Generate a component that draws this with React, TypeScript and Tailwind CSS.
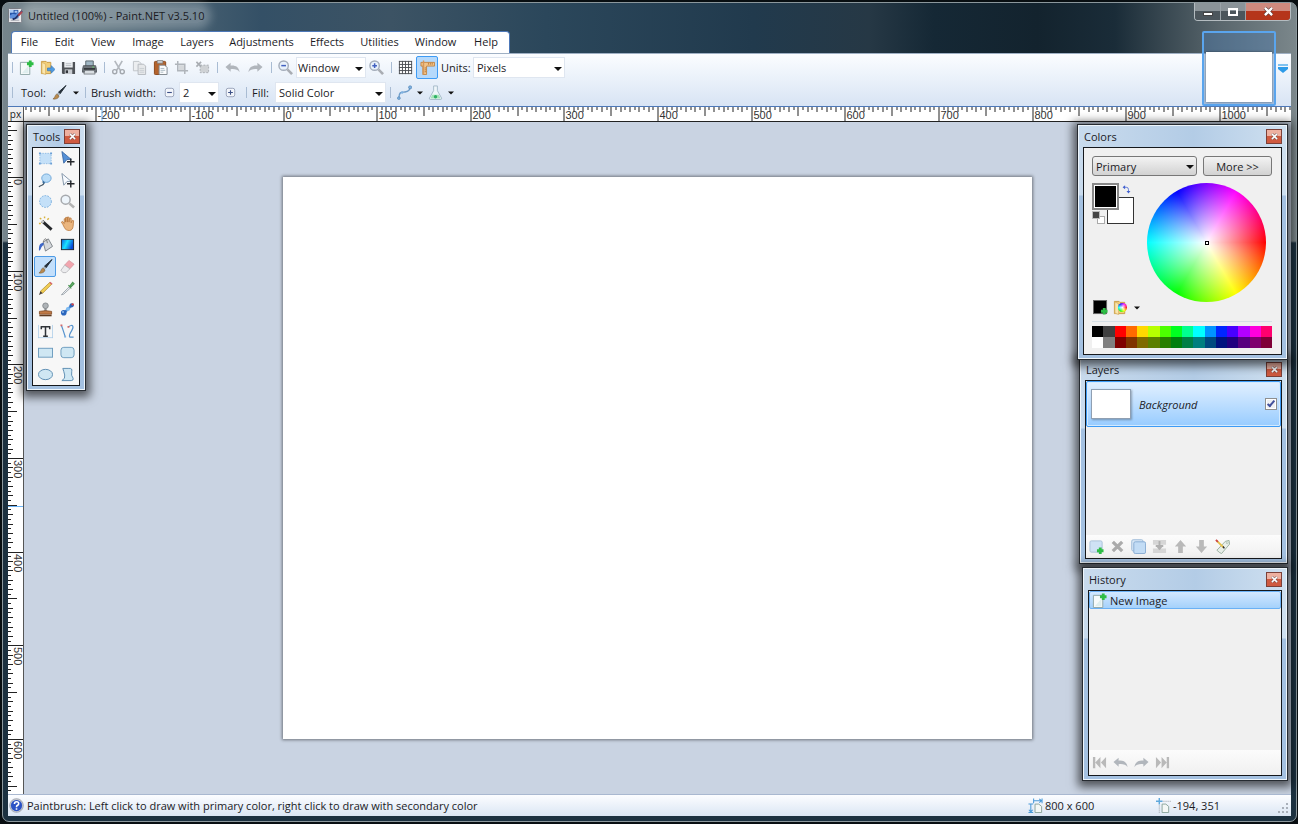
import React, { useState } from 'react';
import clsx from 'clsx';

const ZOOM = 749 / 800;

const MENUS = [
    { name: 'File', width: 'w-[35px]' },
    { name: 'Edit', width: 'w-[35px]' },
    { name: 'View', width: 'w-[42px]' },
    { name: 'Image', width: 'w-[48px]' },
    { name: 'Layers', width: 'w-[50px]' },
    { name: 'Adjustments', width: 'w-[79px]' },
    { name: 'Effects', width: 'w-[52px]' },
    { name: 'Utilities', width: 'w-[53px]' },
    { name: 'Window', width: 'w-[59px]' },
    { name: 'Help', width: 'w-[42px]' },
];

const PALETTE = [
    '#000000', '#404040', '#ff0000', '#ff6a00', '#ffd800', '#b6ff00', '#4cff00', '#00ff21',
    '#00ff90', '#00ffff', '#0094ff', '#0026ff', '#4800ff', '#b200ff', '#ff00dc', '#ff006e',
    '#ffffff', '#808080', '#7f0000', '#7f3300', '#7f6a00', '#5b7f00', '#267f00', '#007f0e',
    '#007f46', '#007f7f', '#004a7f', '#00137f', '#21007f', '#57007f', '#7f006e', '#7f0037',
];

const Svg = ({ children, className = 'h-[15px] w-[15px]' }) => (
    <svg viewBox="0 0 16 16" className={clsx('shrink-0', className)} fill="none" aria-hidden="true">
        {children}
    </svg>
);

/* ---------- icons ---------- */

const PlusBadge = ({ x, y }) => (
    <path d={`M${x} ${y - 3.5}v7M${x - 3.5} ${y}h7`} stroke="#2ebd45" strokeWidth="3" />
);

const ICONS = {
    app: (
        <>
            <rect x="0.5" y="0.5" width="14" height="15" rx="1" fill="#e8e8ea" stroke="#70737c" />
            <rect x="2" y="2" width="9" height="9" fill="#2454a8" />
            <path d="M2 2h4v3H2zM7 3h3v2H7z" fill="#a9c9f2" />
            <path d="M2 8l3-2 3 1 3-3v7H2z" fill="#5d8fdc" />
            <path d="M3 13h9" stroke="#9a9da6" />
            <path d="M5 12l3-1 7-8" stroke="#1c2f66" strokeWidth="2" />
            <path d="M11 8l4-4" stroke="#a8333f" strokeWidth="2" />
        </>
    ),
    newDoc: (
        <>
            <path d="M1.500 2.500h10v13h-10z" fill="#f6fafa" stroke="#8ea5a5" />
            <path d="M3 14h7V6z" fill="#dfeeee" />
            <PlusBadge x={12} y={4} />
        </>
    ),
    open: (
        <>
            <path d="M1.500 1.500h5l1 1h4v12h-10z" fill="#f3cf7a" stroke="#c99b45" />
            <path d="M2 2.500l4 2v11l-4-1.500z" fill="#fae6ae" stroke="#d5ab55" strokeWidth="0.7" />
            <path d="M8 8.500h4V6l4 4-4 4v-2.500H8z" fill="#4f9be0" stroke="#2f74b8" strokeWidth="0.7" />
        </>
    ),
    save: (
        <>
            <path d="M1 2h14v13H2l-1-1z" fill="#4e5257" />
            <path d="M3.500 2h9v6h-9z" fill="#eef1f4" />
            <path d="M5 4h6M5 6h6" stroke="#b5bac0" />
            <path d="M4 10h8v5H4z" fill="#c9cdd2" />
            <path d="M5 11h2.500v3H5z" fill="#33363a" />
        </>
    ),
    print: (
        <>
            <path d="M4 1h8v6H4z" fill="#9fb6c4" stroke="#59656d" />
            <path d="M1.500 6h13l1 4v3h-15v-3z" fill="#6f767c" stroke="#43484d" strokeWidth="0.800" />
            <path d="M2 9.500h12" stroke="#26292c" strokeWidth="1.500" />
            <path d="M3 11h10l1 4H2z" fill="#d9dee2" stroke="#555b60" strokeWidth="0.700" />
            <path d="M11 7.500h2" stroke="#6fd76f" />
        </>
    ),
    cut: (
        <>
            <path d="M4 1l6 10M12 1L6 11" stroke="#b3b8be" strokeWidth="1.800" />
            <circle cx="4" cy="12.500" r="2.200" stroke="#a3a8ae" strokeWidth="1.500" />
            <circle cx="12" cy="12.500" r="2.200" stroke="#a3a8ae" strokeWidth="1.500" />
        </>
    ),
    copy: (
        <>
            <path d="M1.500 1.500h6l2 2v8h-8z" fill="#eceef0" stroke="#bfc3c8" />
            <path d="M6.500 4.500h6l2 2v9h-8z" fill="#e6e8ea" stroke="#b4b9be" />
            <path d="M8 9h5M8 11h5M8 13h5" stroke="#c9cdd1" />
        </>
    ),
    paste: (
        <>
            <rect x="1.500" y="1.500" width="12" height="14" rx="1" fill="#b4632c" stroke="#8a4518" />
            <path d="M4.500 0.500h6v3h-6z" fill="#c9ccd0" stroke="#777" strokeWidth="0.700" />
            <path d="M6.500 5.500h6l2.500 2.500v7.500H6.500z" fill="#fbfcfd" stroke="#7d8790" />
            <path d="M8 9h4M8 11h5M8 13h3" stroke="#a9b6c0" />
        </>
    ),
    crop: (
        <>
            <path d="M5 5.500h6v6H5z" fill="#d5d8db" />
            <path d="M4 1v10.500h11M1 4.500h10.500V15" stroke="#b0b5bb" strokeWidth="1.600" />
        </>
    ),
    deselect: (
        <>
            <rect x="5.500" y="5.500" width="9" height="8" fill="#cfd2d5" stroke="#a7acb1" strokeDasharray="2 1.500" />
            <path d="M1.500 2l5 5M6.500 2l-5 5" stroke="#a9adb2" strokeWidth="1.800" />
        </>
    ),
    undo: <path d="M0.500 7.500L6 3v3c5-0.500 9 1.500 9.500 7-2-3-5-3.500-9.500-3.200V12.500z" fill="#b1b6bc" />,
    redo: <path d="M15.500 7.500L10 3v3c-5-0.500-9 1.500-9.500 7 2-3 5-3.500 9.500-3.200V12.500z" fill="#b1b6bc" />,
    zoomOut: (
        <>
            <path d="M10 10l5 5" stroke="#a9adb3" strokeWidth="2.800" />
            <circle cx="6" cy="6" r="5" fill="#e8f1fb" stroke="#a4adba" strokeWidth="1.500" />
            <path d="M3.500 6h5" stroke="#4261c0" strokeWidth="1.600" />
        </>
    ),
    zoomIn: (
        <>
            <path d="M10 10l5 5" stroke="#a9adb3" strokeWidth="2.800" />
            <circle cx="6" cy="6" r="5" fill="#e8f1fb" stroke="#a4adba" strokeWidth="1.500" />
            <path d="M3.500 6h5M6 3.500v5" stroke="#4261c0" strokeWidth="1.600" />
        </>
    ),
    grid: (
        <>
            <path d="M1 1h14v14H1z" fill="#fff" />
            <path d="M1.500 1v14M4.750 1v14M8 1v14M11.250 1v14M14.500 1v14M1 1.500h14M1 4.750h14M1 8h14M1 11.250h14M1 14.500h14" stroke="#4b4e53" />
        </>
    ),
    rulers: (
        <>
            <path d="M1 2.500h14.500v4H7v9H3V6.500H1z" fill="#f2c388" stroke="#c07f3a" strokeWidth="0.900" />
            <path d="M3 0.500h1.500v15H3z" fill="#d6975a" />
            <path d="M9 3v2M11 3v2M13 3v2M5 8.500h1.500M5 10.500h1.500M5 12.500h1.500" stroke="#a86a2c" strokeWidth="0.800" />
        </>
    ),
    brush: (
        <>
            <path d="M15 0.500L8.500 9.500 6.500 8z" fill="#25303a" stroke="#25303a" strokeLinejoin="round" />
            <path d="M6.800 7.800l2 1.700-1.600 2.200-2.400-2z" fill="#a9b1b8" />
            <path d="M5 9.500c-2 1.500-1.500 3.500-4 5.500 4 0.500 6-1 6.500-3.200z" fill="#b98a4e" stroke="#6b4a22" strokeWidth="0.500" />
        </>
    ),
    minus: (
        <>
            <rect x="3.500" y="3.500" width="9" height="9" rx="2" fill="#f3f6fb" stroke="#98a1b8" />
            <path d="M5.500 8h5" stroke="#3c4f86" strokeWidth="1.200" />
        </>
    ),
    plus: (
        <>
            <rect x="3.500" y="3.500" width="9" height="9" rx="2" fill="#f3f6fb" stroke="#98a1b8" />
            <path d="M5.500 8h5M8 5.500v5" stroke="#3c4f86" strokeWidth="1.200" />
        </>
    ),
    curve: (
        <>
            <path d="M2 14C2 6 6 8 8.500 7.500S14 6 14 2" stroke="#6d9cc9" strokeWidth="1.500" />
            <circle cx="2" cy="14" r="1.500" fill="#7fb2e2" stroke="#4a7cab" strokeWidth="0.600" />
            <circle cx="5.500" cy="8" r="1.300" fill="#7fb2e2" />
            <circle cx="14" cy="2.500" r="1.700" fill="#7fb2e2" stroke="#4a7cab" strokeWidth="0.600" />
        </>
    ),
    flask: (
        <>
            <path d="M6 1h4v5l4.500 8q0.300 1.500-1.500 1.500H3q-1.800 0-1.500-1.500L6 6z" fill="#eef6fa" stroke="#9db3c2" strokeWidth="0.900" />
            <path d="M4.500 10.500h7l2 4H2.500z" fill="#a4e2b9" />
            <circle cx="8" cy="12.500" r="1.800" fill="#2fb265" />
        </>
    ),
    rectSelect: (
        <>
            <rect x="2" y="2.500" width="12" height="11" fill="#c4e0f8" stroke="#8fbce4" strokeDasharray="1.500 1.200" />
            <path d="M1 1.500h2v2H1zM13 1.500h2v2h-2zM1 12.500h2v2H1zM13 12.500h2v2h-2z" fill="#6a9fd6" />
        </>
    ),
    movePixels: (
        <>
            <path d="M2 0.500l10 8.500H7.500L4 13z" fill="#5590d6" stroke="#2c5c9c" strokeWidth="0.800" />
            <path d="M11.500 8v7.500M7.500 11.500h8" stroke="#23262b" strokeWidth="1.500" />
        </>
    ),
    lasso: (
        <>
            <path d="M6 10c1 4-3 2-5 5" stroke="#4a5966" strokeWidth="1.200" />
            <ellipse cx="9" cy="5.500" rx="5" ry="4.500" fill="#b9dcf7" stroke="#6ea5d8" />
            <path d="M5 9l2 2" stroke="#3b6f9e" strokeWidth="1.800" />
        </>
    ),
    moveSelection: (
        <>
            <path d="M2 0.500l10 8.500H7.500L4 13z" fill="#f8fbff" stroke="#8093a8" />
            <path d="M11.500 8v7.500M7.500 11.500h8" stroke="#23262b" strokeWidth="1.500" />
        </>
    ),
    ellipseSelect: <circle cx="8" cy="8" r="6.300" fill="#c4e0f8" stroke="#74abdc" strokeDasharray="1.800 1.300" />,
    zoomTool: (
        <>
            <path d="M10 10l5 4.500" stroke="#b3b3b3" strokeWidth="2.800" />
            <circle cx="6" cy="6" r="4.800" fill="#eef5fb" stroke="#a6a9ad" strokeWidth="1.600" />
        </>
    ),
    wand: (
        <>
            <path d="M4.500 5.500L14.500 14.500" stroke="#24262a" strokeWidth="3" />
            <path d="M4 5l2 2" stroke="#c8c8c8" strokeWidth="2.500" />
            <path d="M2 2l1.500 1.500M7 0.500v2M1 8h2M10 4l1.500-1.500" stroke="#d7b13c" strokeWidth="1.500" />
        </>
    ),
    hand: (
        <path
            d="M3 9L1.500 6.500l1.200-0.800L4.500 8V3l1.500-0.300V6.500V1.500h1.800v5V1.200h1.800V6.500l0.800-4.500 1.500 0.300v5l1.200-2.800 1.400 0.500-0.500 6c-0.300 2.500-1.500 4.500-4 4.500S5.500 14.500 4.500 12z"
            fill="#eab57e" stroke="#b8763a" strokeWidth="0.800"
        />
    ),
    bucket: (
        <>
            <path d="M5.500 5.500l5.500-3.500 4.500 8-7.500 5z" fill="#d5d8dc" stroke="#6f757b" strokeWidth="0.900" />
            <path d="M5.500 5.500C7 1 9 0 10 6.500" stroke="#777" />
            <path d="M6 6C1.500 6.500 1 9 1 14.500c2.500 0 1.500-4 5-6z" fill="#3d66c8" />
        </>
    ),
    gradient: (
        <>
            <rect x="1.500" y="2.500" width="13" height="11" fill="url(#gradTool)" stroke="#1a2430" />
            <defs>
                <linearGradient id="gradTool" x1="0" y1="0" x2="1" y2="0.400">
                    <stop offset="0" stopColor="#0a5ae0" />
                    <stop offset="0.500" stopColor="#19e4ff" />
                    <stop offset="1" stopColor="#0848d8" />
                </linearGradient>
            </defs>
        </>
    ),
    eraser: (
        <>
            <path d="M9.500 1.500l5.500 4-4.500 5-5.500-4z" fill="#f2a5ae" stroke="#d08b94" strokeWidth="0.700" />
            <path d="M5 6.500l5.500 4-4 4H3L1 12z" fill="#ececee" stroke="#a5a5aa" strokeWidth="0.700" />
        </>
    ),
    pencil: (
        <>
            <path d="M12.500 1.500l2 2-9.500 9.500-2.500-2z" fill="#f0cd54" stroke="#a98322" strokeWidth="0.700" />
            <path d="M12 2l1.200-1.200 2.300 2L14.500 4z" fill="#d6686c" />
            <path d="M2.500 11L1 15l4-2z" fill="#4a4038" />
        </>
    ),
    picker: (
        <>
            <path d="M10 6L3 13l-1.500 1.800L4 14l7-6.500z" fill="#e9edf0" stroke="#8d969d" strokeWidth="0.800" />
            <path d="M9 4.500l3 3.500M10.500 5.500l3-4 1.500 1.500-3 3z" fill="#6fbd75" stroke="#4a9451" strokeWidth="1.200" />
        </>
    ),
    stamp: (
        <>
            <circle cx="8" cy="4" r="3" fill="#aeb3b7" stroke="#787d81" strokeWidth="0.800" />
            <path d="M7 6.500h2l0.500 4h-3z" fill="#8b8f93" />
            <path d="M1.500 10q6.500-1.500 13 0v3h-13z" fill="#c07a47" stroke="#7c451f" strokeWidth="0.800" />
            <path d="M1.500 14.500h13" stroke="#5f3a20" strokeWidth="1.500" />
        </>
    ),
    recolor: (
        <>
            <path d="M5 11l7-7" stroke="#3d7dcc" strokeWidth="2.500" />
            <circle cx="12.500" cy="3.500" r="2.300" fill="#2b66bd" />
            <circle cx="13.500" cy="2.500" r="1.300" fill="#d34747" />
            <circle cx="8.500" cy="7.500" r="2.200" fill="#7fbcf2" />
            <circle cx="4" cy="11.500" r="3" fill="#2b66bd" />
            <circle cx="3.200" cy="10.600" r="1" fill="#9cc5f0" />
        </>
    ),
    text: (
        <>
            <path d="M0.500 1v14M15.500 1v14M0 14.500h16" stroke="#a8cbe8" strokeWidth="0.800" />
            <path d="M8 3v10M3 3h10M3.500 2.500v3M12.500 2.500v3M5.500 13h5" stroke="#2f3338" strokeWidth="1.600" />
        </>
    ),
    line: (
        <>
            <path d="M1.500 1.500C3 5 4 9 5.500 13.500M9 3c5-3.500 6 0 3.500 4s-3 6-2 7h4" stroke="#5692cc" strokeWidth="1.300" />
            <path d="M0.500 0.500h2v2h-2zM8 2h2v2H8z" fill="#d66a6a" />
            <path d="M4.500 12.500h2v2h-2z" fill="#7fb2e2" />
        </>
    ),
    rect: <rect x="0.500" y="3.500" width="15" height="9.500" fill="#cfe7f3" stroke="#6b9bbd" />,
    roundRect: <rect x="1" y="2.500" width="14" height="11" rx="3" fill="#cfe7f3" stroke="#6b9bbd" />,
    ellipse: <ellipse cx="8" cy="8" rx="7.500" ry="5.500" fill="#cfe7f3" stroke="#5a8bb0" />,
    freeform: <path d="M3 1.500h6.500q4-0.500 3 3.500t1.500 7q0.500 2.500-2 2.500H2q4-2 3-6T3 1.500z" fill="#cfe7f3" stroke="#5a8bb0" />,
    addLayer: (
        <>
            <rect x="1" y="2" width="13" height="12" rx="1.500" fill="#cfe2f5" stroke="#a9c0d9" />
            <PlusBadge x={12} y={12.500} />
        </>
    ),
    remove: <path d="M3 3l10 10M13 3L3 13" stroke="#ababab" strokeWidth="3.500" />,
    duplicate: (
        <>
            <rect x="0.800" y="0.800" width="12" height="12" rx="1.500" fill="#d9e8f6" stroke="#9bb9d8" />
            <rect x="3" y="3" width="12.500" height="12.500" rx="1.500" fill="#c2dcf5" stroke="#86abd2" />
        </>
    ),
    merge: (
        <>
            <path d="M1 1h14v5H1zM1 10h14v5H1z" fill="#d6d6d6" />
            <path d="M8 2v9M4 7.500h8" stroke="#b0b0b0" strokeWidth="2" />
            <path d="M5 8.500h6L8 12z" fill="#b0b0b0" />
        </>
    ),
    up: <path d="M8 1l6 7h-3.500v7h-5V8H2z" fill="#b9b9b9" />,
    down: <path d="M8 15l6-7h-3.500V1h-5v7H2z" fill="#b9b9b9" />,
    properties: (
        <>
            <path d="M2 12L11 2.500l4-1 0.500 4L7 15.500l-2-1z" fill="#e8efe9" stroke="#8fa796" strokeWidth="0.900" />
            <circle cx="13" cy="4" r="1" fill="#fff" stroke="#8fa796" strokeWidth="0.600" />
            <path d="M2 2l7 7" stroke="#e3c04a" strokeWidth="2" />
            <path d="M1 1l2 2" stroke="#cc4646" strokeWidth="2" />
            <path d="M8.500 8l1.500 2" stroke="#2b2b2b" strokeWidth="1.500" />
        </>
    ),
    rewind: <path d="M1 2h2.500v12H1zM9 2v12L3.500 8zM15 2v12L9.500 8z" fill="#b9b9b9" />,
    forward: <path d="M15 2h-2.500v12H15zM7 2v12l5.500-6zM1 2v12l5.500-6z" fill="#b9b9b9" />,
    swap: (
        <>
            <path d="M4 4h3.500q4 0 4 4v3" stroke="#5470d6" strokeWidth="1.600" />
            <path d="M5.500 0.500v7L1 4zM8 10.500h7l-3.500 4.500z" fill="#4361cf" />
        </>
    ),
    addColor: (
        <>
            <rect x="0.500" y="0.500" width="14" height="14" fill="#000" stroke="#666" />
            <PlusBadge x={12} y={12} />
        </>
    ),
    help: (
        <>
            <circle cx="8" cy="8" r="7.300" fill="#c9ccd2" stroke="#8a8f9b" strokeWidth="0.700" />
            <circle cx="8" cy="8" r="6" fill="#2a52c5" />
            <path d="M5.800 6.300q0-2.300 2.300-2.300t2.200 2q0 1.200-1.200 1.800T8 9.800M8 11v1.600" stroke="#fff" strokeWidth="1.700" />
        </>
    ),
    imageSize: (
        <>
            <path d="M6 0.500v5M15 0.500v5M6 3h8M12 1l2.500 2-2.500 2M0.500 6.500h5M0.500 15.500h5M3 7v8M1 12.500l2 2.500 2-2.500" stroke="#4a9ad8" strokeWidth="1.100" />
            <path d="M7.500 6.500h4l3 2.500v6.500h-7z" fill="#f4f8f6" stroke="#8aa39b" />
        </>
    ),
    position: (
        <>
            <path d="M3.500 0v7M0 3.500h7" stroke="#5fa8dc" strokeWidth="1.500" />
            <path d="M3.500 8v8M8 3.500h8" stroke="#8a939b" strokeDasharray="1 1.200" />
            <path d="M6.500 6.500h4l3 2.500v6.500h-7z" fill="#f4f8f6" stroke="#8aa39b" />
        </>
    ),
};

/* ---------- small controls ---------- */

const IconButton = ({ icon, label, size = 'w-[21px] h-[21px]' }) => (
    <button type="button" aria-label={label} className={clsx('flex shrink-0 items-center justify-center', size)}>
        <Svg>{ICONS[icon]}</Svg>
    </button>
);

const Separator = () => <span className="ml-1 mr-[3px] h-[11px] w-px shrink-0 bg-[#a9bcd3]" />;

const Triangle = ({ className = 'w-2' }) => (
    <svg viewBox="0 0 8 4" className={clsx('h-1 shrink-0', className)} aria-hidden="true">
        <path d="M0 0h8L4 4z" fill="#111" />
    </svg>
);

const DropButton = ({ label, width }) => (
    <button type="button" aria-label={label} className={clsx('flex h-[21px] shrink-0 items-center justify-center', width)}>
        <Triangle className="w-[6px]" />
    </button>
);

const Dropdown = ({ id = undefined, label = undefined, options, className, pad = 'pl-[3px]' }) => (
    <span className={clsx('relative flex shrink-0', className)}>
        <select id={id} aria-label={label} className={clsx('w-full appearance-none bg-transparent outline-none', pad)}>
            {options.map((o) => (
                <option key={o}>{o}</option>
            ))}
        </select>
        <Triangle className="pointer-events-none absolute right-[2px] top-1/2 w-2 -translate-y-px" />
    </span>
);

/* ---------- rulers ---------- */

const TICKS = Array.from({ length: 321 }, (_, i) => (i - 80) * 5);

const Ruler = ({ vertical = false }) => {
    const center = vertical ? 300 : 400;
    const labels = vertical ? [0, 100, 200, 300, 400, 500, 600] : [-200, -100, 0, 100, 200, 300, 400, 500, 600, 700, 800, 900, 1000];
    const cursor = vertical ? 351 : -194;
    const cursorPos = Math.round((cursor - center) * ZOOM);
    return (
        <svg
            className={vertical ? 'h-full w-[15px]' : 'h-[14px] w-full'}
            aria-label={vertical ? 'Vertical ruler' : 'Horizontal ruler'}
        >
            <svg x={vertical ? 0 : '50%'} y={vertical ? '50%' : 0} overflow="visible">
                {TICKS.map((u) => {
                    const p = Math.round((u - center) * ZOOM);
                    const len = u % 100 === 0 ? 15 : u % 50 === 0 ? 9 : u % 10 === 0 ? 5 : 3;
                    return vertical ? (
                        <rect key={u} x="0" y={p} width={len} height="1" fill="#222" />
                    ) : (
                        <rect key={u} x={p} y="0" width="1" height={len} fill="#222" />
                    );
                })}
                {labels.map((u) => {
                    const p = Math.round((u - center) * ZOOM);
                    return (
                        <text
                            key={u}
                            className="fill-[#333] font-['Liberation_Sans',sans-serif] text-[11px]"
                            transform={vertical ? `translate(6 ${p + 2}) rotate(90)` : `translate(${p + 2} 12)`}
                        >
                            {u}
                        </text>
                    );
                })}
                {vertical ? (
                    <rect x="0" y={cursorPos} width="15" height="1" fill="#6bb4f7" />
                ) : (
                    <rect x={cursorPos} y="0" width="1" height="14" fill="#6bb4f7" />
                )}
            </svg>
        </svg>
    );
};

/* ---------- floating panels ---------- */

const Panel = ({ title, className = '', children }) => (
    <section
        className={clsx(
            'pointer-events-auto relative flex flex-col border border-[#262b31] px-[5px] pb-1',
            'bg-[linear-gradient(to_bottom,transparent_70px,#a4c1e1_71px),linear-gradient(to_right,#c9dbed,#b3cce6_55%,#cfe0f0)]',
            'shadow-[inset_0_0_0_1px_#eef5fb,0_2px_9px_4px_rgba(0,0,0,0.600)]',
            className,
        )}
    >
        <header className="flex h-[22px] shrink-0 items-center justify-between pl-px">
            <h2>{title}</h2>
            <button
                type="button"
                aria-label={`Close ${title}`}
                className="flex h-[15px] w-[16px] items-center justify-center border border-[#7c4038] bg-linear-to-b from-[#eeb0a0] from-45% to-[#cf5a40] to-50%"
            >
                <svg viewBox="0 0 8 8" className="h-[7px] w-[7px]" aria-hidden="true">
                    <path d="M1 1l6 6M7 1L1 7" stroke="#6b4a4a" strokeWidth="3" />
                    <path d="M1 1l6 6M7 1L1 7" stroke="#fff" strokeWidth="1.800" />
                </svg>
            </button>
        </header>
        <div className="flex min-h-0 flex-1 flex-col border border-[#15181c] bg-[#f0f0f0]">{children}</div>
    </section>
);

const TOOLS = [
    ['rectSelect', 'Rectangle Select'], ['movePixels', 'Move Selected Pixels'],
    ['lasso', 'Lasso Select'], ['moveSelection', 'Move Selection'],
    ['ellipseSelect', 'Ellipse Select'], ['zoomTool', 'Zoom'],
    ['wand', 'Magic Wand'], ['hand', 'Pan'],
    ['bucket', 'Paint Bucket'], ['gradient', 'Gradient'],
    ['brush', 'Paintbrush'], ['eraser', 'Eraser'],
    ['pencil', 'Pencil'], ['picker', 'Color Picker'],
    ['stamp', 'Clone Stamp'], ['recolor', 'Recolor'],
    ['text', 'Text'], ['line', 'Line / Curve'],
    ['rect', 'Rectangle'], ['roundRect', 'Rounded Rectangle'],
    ['ellipse', 'Ellipse'], ['freeform', 'Freeform Shape'],
];

const ToolsPanel = () => {
    const [active, setActive] = useState('brush');
    return (
        <Panel title="Tools" className="w-[60px]">
            <div className="grid h-[237px] grid-cols-2 grid-rows-11 bg-[#f7f7f7] px-px">
                {TOOLS.map(([icon, label]) => (
                    <button
                        key={icon}
                        type="button"
                        aria-label={label}
                        onClick={() => setActive(icon)}
                        className={clsx(
                            'flex items-center justify-center rounded-[2px] border',
                            active === icon ? 'border-[#4d9be6] bg-[#c3dffb]' : 'border-transparent',
                        )}
                    >
                        <Svg>{ICONS[icon]}</Svg>
                    </button>
                ))}
            </div>
        </Panel>
    );
};

const ColorsPanel = () => (
    <Panel title="Colors" className="z-10 h-[236px] w-[211px]">
        <div className="flex flex-1 flex-col pl-2 pr-[9px] pt-2">
            <div className="flex justify-between">
                <Dropdown
                    label="Active color"
                    options={['Primary', 'Secondary']}
                    className="h-[20px] w-[105px] rounded-[3px] border border-[#777] bg-linear-to-b from-[#f3f3f3] to-[#d2d2d2]"
                />
                <button type="button" className="h-[20px] w-[69px] rounded-[3px] border border-[#777] bg-linear-to-b from-[#f3f3f3] to-[#d2d2d2]">
                    More &gt;&gt;
                </button>
            </div>
            <div className="flex justify-between pr-[6px] pt-[7px]">
                <div className="flex flex-col justify-between">
                    <div className="relative h-[41px] w-[42px]">
                        <button type="button" aria-label="Secondary color" className="absolute bottom-0 right-0 h-[27px] w-[27px] border border-[#333] bg-white" />
                        <button type="button" aria-label="Primary color" className="absolute left-0 top-0 h-[27px] w-[27px] border-2 border-[#888] bg-black shadow-[inset_0_0_0_1px_#fff]" />
                        <button type="button" aria-label="Swap colors" className="absolute right-[3px] top-[2px]">
                            <Svg className="h-[9px] w-[9px]">{ICONS.swap}</Svg>
                        </button>
                        <button type="button" aria-label="Reset colors" className="absolute bottom-0 left-0 h-[13px] w-[13px]">
                            <span className="absolute bottom-0 right-0 h-2 w-2 border border-[#aaa] bg-white" />
                            <span className="absolute left-0 top-0 h-2 w-2 border border-[#bbb] bg-[#444]" />
                        </button>
                    </div>
                    <div className="flex items-center">
                        <IconButton icon="addColor" label="Add color to palette" size="w-[16px] h-[17px]" />
                        <button type="button" aria-label="Palettes" className="ml-[5px] flex items-center">
                            <span className="relative h-[15px] w-[15px]">
                                <Svg>
                                    <path d="M1.500 1.500h5l1 1h5v12h-11z" fill="#f3cf7a" stroke="#c99b45" />
                                    <path d="M2 2l4 2v11.500l-4-1.500z" fill="#fae6ae" stroke="#d5ab55" strokeWidth="0.700" />
                                </Svg>
                                <span className="absolute right-[1px] top-[3px] h-[9px] w-[9px] rounded-full bg-[radial-gradient(#fff,transparent_70%),conic-gradient(from_90deg,red,yellow,lime,cyan,blue,magenta,red)]" />
                            </span>
                            <Triangle className="ml-[6px] w-[6px]" />
                        </button>
                    </div>
                </div>
                <div className="flex h-[133px] flex-col">
                    <div className="relative h-[119px] w-[119px] rounded-full bg-[radial-gradient(circle_closest-side,#fff,transparent),conic-gradient(from_90deg,red,yellow,lime,cyan,blue,magenta,red)]">
                        <span className="absolute left-1/2 top-1/2 h-1 w-1 -translate-1/2 border border-black bg-white" />
                    </div>
                </div>
            </div>
            <hr className="mt-[5px] border-[#d5dfe5]" />
            <div className="mt-1 grid h-[22px] grid-cols-16">
                {PALETTE.map((color) => (
                    <button key={color} type="button" aria-label={color} style={{ backgroundColor: color }} />
                ))}
            </div>
        </div>
    </Panel>
);

const LAYER_ACTIONS = [
    ['addLayer', 'Add New Layer'], ['remove', 'Delete Layer'], ['duplicate', 'Duplicate Layer'],
    ['merge', 'Merge Layer Down'], ['up', 'Move Layer Up'], ['down', 'Move Layer Down'], ['properties', 'Layer Properties'],
];

const LayersPanel = () => (
    <Panel title="Layers" className="-mt-[3px] h-[207px] w-[209px]">
        <div className="flex min-h-0 flex-1 flex-col">
            <label className="flex h-[46px] shrink-0 items-center rounded-[2px] border border-[#3d9bf5] bg-linear-to-b from-[#e2f0ff] to-[#98ccff] pl-1 pr-[3px] shadow-[inset_0_0_0_1px_#d3eaff]">
                <span className="h-[30px] w-[40px] border border-[#8f9fb2] bg-white shadow-[1px_1px_2px_rgba(0,0,0,0.300)]" />
                <span className="flex-1 pl-2 italic">Background</span>
                <input
                    type="checkbox"
                    defaultChecked
                    className="relative h-[12px] w-[12px] appearance-none border border-[#8e8f8f] bg-[#eef0f3] shadow-[inset_0_0_0_1px_#fff] checked:after:absolute checked:after:left-[3px] checked:after:h-[8px] checked:after:w-[4px] checked:after:rotate-40 checked:after:border-b-2 checked:after:border-r-2 checked:after:border-[#42509c]"
                />
            </label>
            <div className="flex-1" />
            <div className="flex h-[23px] items-center bg-linear-to-b from-[#fcfcfc] to-[#f0f0f0]">
                {LAYER_ACTIONS.map(([icon, label]) => (
                    <IconButton key={icon} icon={icon} label={label} />
                ))}
            </div>
        </div>
    </Panel>
);

const HistoryPanel = () => (
    <Panel title="History" className="mt-[3px] h-[214px] w-[206px]">
        <div className="flex min-h-0 flex-1 flex-col">
            <button type="button" className="flex h-[18px] shrink-0 items-center rounded-[2px] border border-[#6bb1f5] bg-linear-to-b from-[#d3e8ff] to-[#a5d1fb] pl-[2px] text-left">
                <Svg>{ICONS.newDoc}</Svg>
                <span className="pl-[3px]">New Image</span>
            </button>
            <div className="flex-1" />
            <div className="flex h-[25px] items-center bg-linear-to-b from-[#fcfcfc] to-[#f0f0f0]">
                <IconButton icon="rewind" label="Rewind" />
                <IconButton icon="undo" label="Undo" />
                <IconButton icon="redo" label="Redo" />
                <IconButton icon="forward" label="Fast forward" />
            </div>
        </div>
    </Panel>
);

/* ---------- window chrome ---------- */

const CAPTION = 'flex items-center justify-center border-r border-[#9ba4a9] bg-linear-to-b from-[#8b9499] from-45% to-[#4c565c] to-50%';

const TitleBar = () => (
    <header className="flex h-[28px] items-start justify-between">
        <h1 className="flex h-[24px] items-center">
            <Svg>{ICONS.app}</Svg>
            <span className="ml-1 rounded-full bg-white/25 px-px shadow-[0_0_8px_6px_rgba(255,255,255,0.250)]">
                Untitled (100%) - Paint.NET v3.5.10
            </span>
        </h1>
        <div className="flex h-[18px] overflow-hidden rounded-b-[4px] border border-t-0 border-[#b4bcc0]">
            <button type="button" aria-label="Minimize" className={clsx(CAPTION, 'w-[26px]')}>
                <span className="mt-1 h-[4px] w-[10px] border border-[#444] bg-white" />
            </button>
            <button type="button" aria-label="Maximize" className={clsx(CAPTION, 'w-[25px]')}>
                <span className="h-[8px] w-[10px] border-2 border-white" />
            </button>
            <button type="button" aria-label="Close" className="flex w-[44px] items-center justify-center bg-linear-to-b from-[#cf8a7e] from-45% to-[#b5351b] to-50%">
                <svg viewBox="0 0 12 10" className="h-[9px] w-[11px]" aria-hidden="true">
                    <path d="M2 1l8 8M10 1L2 9" stroke="#5e3a38" strokeWidth="4" />
                    <path d="M2 1l8 8M10 1L2 9" stroke="#fff" strokeWidth="2.600" />
                </svg>
            </button>
        </div>
    </header>
);

const MenuBar = () => (
    <nav className="ml-[3px] flex h-[22px] w-[499px] items-center rounded-t-[4px] border border-b-0 border-[#4d78b8] bg-white pb-[2px]">
        {MENUS.map((menu) => (
            <button key={menu.name} type="button" className={clsx('shrink-0 text-center', menu.width)}>
                {menu.name}
            </button>
        ))}
    </nav>
);

const FIELD = 'h-[21px] border border-[#dfe6f0] bg-white';

const Toolbars = () => (
    <div className="relative border-b border-t border-[#4d78b8] border-t-[#9fb0c4] bg-linear-to-b from-[#fbfdff] to-[#d8e4f4] py-px">
        <div className="flex h-[25px] items-center">
            <Separator />
            <IconButton icon="newDoc" label="New" />
            <IconButton icon="open" label="Open" />
            <IconButton icon="save" label="Save" />
            <IconButton icon="print" label="Print" />
            <Separator />
            <IconButton icon="cut" label="Cut" />
            <IconButton icon="copy" label="Copy" />
            <IconButton icon="paste" label="Paste" />
            <IconButton icon="crop" label="Crop to Selection" />
            <IconButton icon="deselect" label="Deselect" />
            <Separator />
            <IconButton icon="undo" label="Undo" size="w-[23px] h-[21px]" />
            <IconButton icon="redo" label="Redo" size="w-[23px] h-[21px]" />
            <Separator />
            <IconButton icon="zoomOut" label="Zoom out" />
            <Dropdown label="Zoom" options={['Window', '100%', '200%']} className={clsx(FIELD, 'w-[70px]')} pad="pl-px" />
            <IconButton icon="zoomIn" label="Zoom in" />
            <Separator />
            <IconButton icon="grid" label="Pixel grid" />
            <button type="button" aria-label="Rulers" className="flex h-[23px] w-[22px] items-center justify-center rounded-[2px] border border-[#3d9bf5] bg-[#b6d9fb]">
                <Svg>{ICONS.rulers}</Svg>
            </button>
            <label htmlFor="units" className="w-[35px] shrink-0 whitespace-nowrap pl-[3px]">Units:</label>
            <Dropdown id="units" options={['Pixels', 'Inches', 'Centimeters']} className={clsx(FIELD, 'w-[92px]')} />
        </div>
        <div className="flex h-[25px] items-center">
            <Separator />
            <span className="w-[33px] shrink-0 pl-[5px]">Tool:</span>
            <IconButton icon="brush" label="Paintbrush" />
            <DropButton label="Choose tool" width="w-[11px]" />
            <Separator />
            <label htmlFor="brush-width" className="w-[70px] shrink-0 whitespace-nowrap pl-[2px]">Brush width:</label>
            <IconButton icon="minus" label="Decrease brush width" size="w-[20px] h-[21px]" />
            <Dropdown id="brush-width" options={['2', '5', '10']} className={clsx(FIELD, 'w-[40px]')} />
            <IconButton icon="plus" label="Increase brush width" size="w-[23px] h-[21px]" />
            <Separator />
            <label htmlFor="fill" className="w-[25px] shrink-0 whitespace-nowrap pl-[2px]">Fill:</label>
            <Dropdown id="fill" options={['Solid Color', 'Horizontal', 'Vertical']} className={clsx(FIELD, 'w-[111px]')} />
            <Separator />
            <IconButton icon="curve" label="Antialiasing" />
            <DropButton label="Antialiasing options" width="w-[10px]" />
            <IconButton icon="flask" label="Blending" />
            <DropButton label="Blending options" width="w-[10px]" />
        </div>
        {/* open image list, pokes up into the title bar */}
        <button type="button" aria-label="Untitled" className="absolute -top-[23px] right-[15px] h-[75px] w-[74px] rounded-[2px] border-2 border-[#5aa5ee] bg-[#4a7db5]/40 px-[2px] pb-[2px] pt-[19px]">
            <span className="block h-full bg-white shadow-[0_0_2px_rgba(0,0,0,0.500)]" />
        </button>
        <button type="button" aria-label="Image list" className="absolute right-[3px] top-[10px]">
            <svg viewBox="0 0 10 9" className="h-[9px] w-[10px]" aria-hidden="true">
                <path d="M0 0h10v2H0z" fill="#7fc2f0" />
                <path d="M0 3h10v2L5 9 0 5z" fill="#2d9be8" />
            </svg>
        </button>
    </div>
);

const StatusBar = () => (
    <footer className="relative flex h-[22px] shrink-0 items-center border-t border-[#a9b8d0] bg-linear-to-b from-[#fcfdff] to-[#dbe6f4] pl-px">
        <Svg>{ICONS.help}</Svg>
        <p className="flex-1 pl-[3px]">Paintbrush: Left click to draw with primary color, right click to draw with secondary color</p>
        <p className="flex w-[128px] items-center gap-[2px]">
            <Svg>{ICONS.imageSize}</Svg>800 x 600
        </p>
        <p className="flex w-[135px] items-center gap-[2px]">
            <Svg>{ICONS.position}</Svg>-194, 351
        </p>
        <svg viewBox="0 0 11 11" className="absolute bottom-[2px] right-[2px] h-[11px] w-[11px]" aria-hidden="true">
            <path d="M8 0h2v2H8zM8 4h2v2H8zM8 8h2v2H8zM4 4h2v2H4zM4 8h2v2H4zM0 8h2v2H0z" fill="#a9b0ba" />
        </svg>
    </footer>
);

const App = () => (
    <div className="flex min-h-screen flex-col bg-[#080e11] p-[2px] pr-px font-['Open_Sans','Noto_Sans',sans-serif] text-[11px] leading-[15px] text-[#1b1b1f]">
        <div className="flex flex-1 flex-col rounded-[7px] border border-[#8b979c] bg-[linear-gradient(to_bottom,transparent_238px,#1c3140_240px),linear-gradient(to_right,#76858c,#5b717d_8%,#345066_20%,#3c5364_30%,#2b475b_42%,#213a4d_58%,#263845_67%,#152835_72%,#13232e_80%,#1a2c38_86%,#59666c_94%,#7b878b)] px-[5px] pb-[5px]">
            <TitleBar />
            <MenuBar />
            <Toolbars />
            <div className="flex h-[15px] shrink-0 border-b border-[#222] bg-white">
                <div className="flex w-[16px] shrink-0 items-center justify-center border-r border-[#555] bg-[#f0f0f0] text-[10px]">px</div>
                <div className="min-w-0 flex-1">
                    <Ruler />
                </div>
            </div>
            <main className="relative flex flex-1 bg-[#c9d3e2]">
                <div className="relative w-[16px] shrink-0 border-r border-[#555] bg-white">
                    <div className="absolute inset-0">
                        <Ruler vertical />
                    </div>
                </div>
                <div className="flex min-h-[672px] flex-1 items-center justify-center">
                    <div className="h-[562px] w-[749px] bg-white shadow-[0_0_3px_1px_rgba(0,0,0,0.450)]" />
                </div>
                <div className="pointer-events-none absolute inset-0 flex items-start justify-between pl-[18px] pr-[3px] pt-[2px]">
                    <ToolsPanel />
                    <div className="flex flex-col items-end">
                        <ColorsPanel />
                        <LayersPanel />
                        <HistoryPanel />
                    </div>
                </div>
            </main>
            <StatusBar />
        </div>
    </div>
);

export default App;
